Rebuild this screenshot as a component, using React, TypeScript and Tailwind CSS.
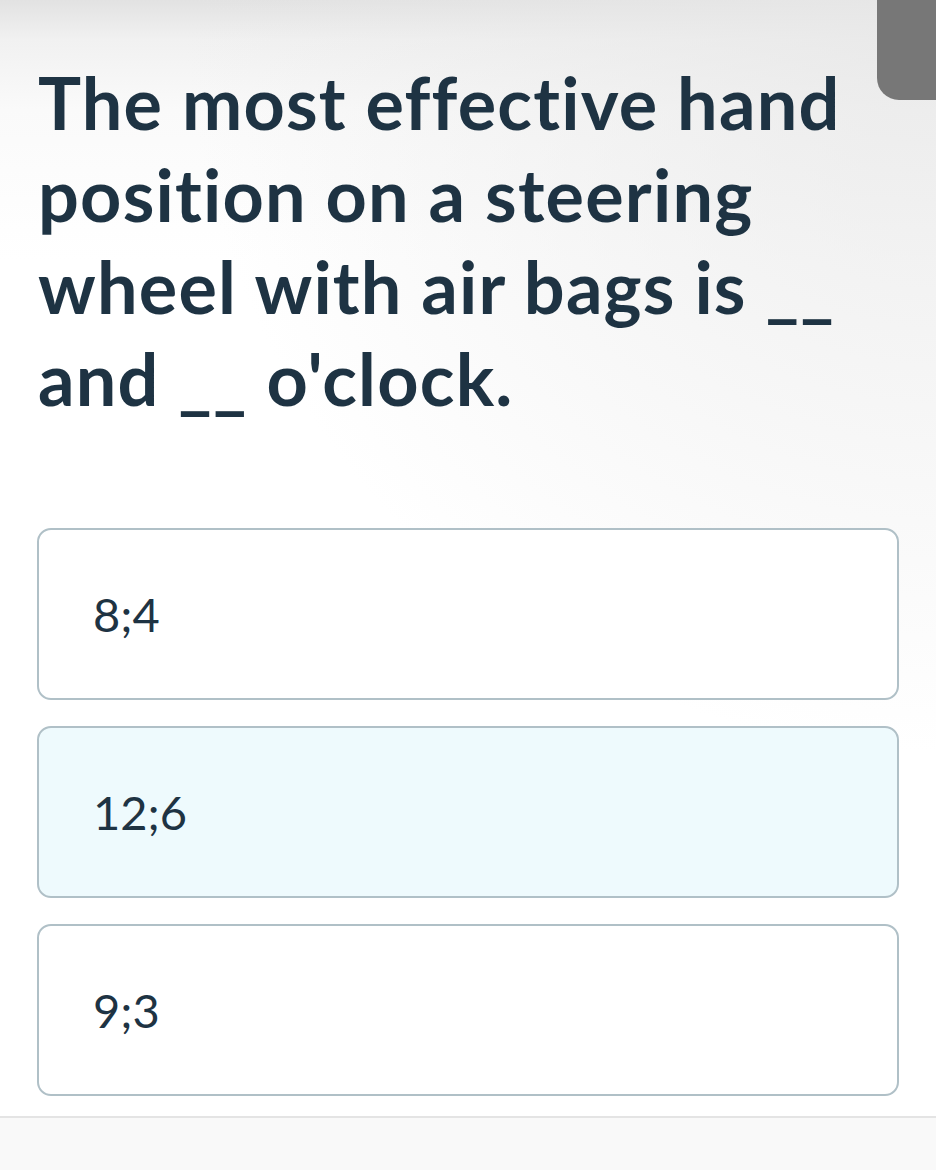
import React from 'react'

const options = [
  { id: 'a', label: '8;4', selected: false },
  { id: 'b', label: '12;6', selected: true },
  { id: 'c', label: '9;3', selected: false },
]

function App() {
  return (
    <div
      className="relative min-h-[1170px] w-full flex flex-col overflow-hidden bg-white text-[#1e3343]"
      style={{ fontFamily: 'Lato, "Noto Sans", sans-serif' }}
    >
      {/* soft sheet shadow along the top */}
      <div className="absolute inset-x-0 top-0 h-[520px] bg-[linear-gradient(to_bottom,#e2e2e2_0px,#f1f1f1_40px,#fafafa_110px,rgba(255,255,255,0)_260px)]" />
      <div className="absolute right-0 top-0 h-[760px] w-[760px] bg-[radial-gradient(ellipse_at_top_right,rgba(232,232,232,0.85),rgba(255,255,255,0)_70%)]" />

      {/* grey tab in the corner */}
      <div className="absolute right-0 top-0 h-[100px] w-[59px] rounded-bl-[22px] bg-[#777777]" />

      <h1 className="relative px-[38px] pt-[56px] text-[72px] font-bold leading-[92px] tracking-[1.2px]">
        The most effective hand position on a steering wheel with air bags is __ and __ o'clock.
      </h1>

      <div className="relative mt-[104px] flex flex-col gap-[26px] px-[37px]">
        {options.map((o) => (
          <button
            key={o.id}
            className={`flex h-[172px] w-full items-center rounded-[14px] border-2 border-[#b0c0c7] pl-[54px] text-left text-[47px] ${
              o.selected ? 'bg-[#eefafd]' : 'bg-white'
            }`}
          >
            {o.label}
          </button>
        ))}
      </div>

      <div className="relative mt-[20px] h-[2px] bg-[#e4e4e4]" />
      <div className="relative flex-1 bg-[#f9f9f9]" />
    </div>
  )
}

export default App
